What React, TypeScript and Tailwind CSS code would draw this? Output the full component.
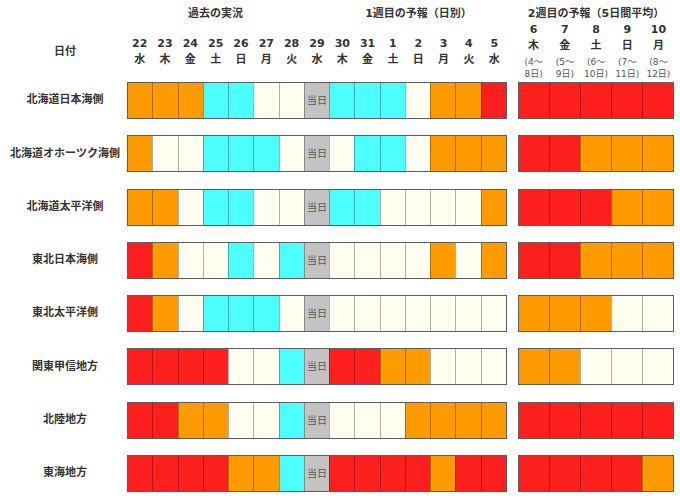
import React from "react";

type C = "R" | "O" | "C" | "W" | "G";

const fill: Record<C, string> = {
  R: "bg-[#ff1f1f]",
  O: "bg-[#ff9a00]",
  C: "bg-[#4dfefe]",
  W: "bg-[#fffef0]",
  G: "bg-[#c3c3c3]",
};

const days = [
  ["22", "水"], ["23", "木"], ["24", "金"], ["25", "土"], ["26", "日"],
  ["27", "月"], ["28", "火"], ["29", "水"], ["30", "木"], ["31", "金"],
  ["1", "土"], ["2", "日"], ["3", "月"], ["4", "火"], ["5", "水"],
];

const weeks = [
  { d: "6", w: "木", a: "(4～", b: "8日)" },
  { d: "7", w: "金", a: "(5～", b: "9日)" },
  { d: "8", w: "土", a: "(6～", b: "10日)" },
  { d: "9", w: "日", a: "(7～", b: "11日)" },
  { d: "10", w: "月", a: "(8～", b: "12日)" },
];

const rows: { name: string; daily: string; avg: string }[] = [
  { name: "北海道日本海側", daily: "OOOCCWWGCCCWOOR", avg: "RRRRR" },
  { name: "北海道オホーツク海側", daily: "OWWCCCWGWCCWOOO", avg: "RROOO" },
  { name: "北海道太平洋側", daily: "OOWCCWWGCCWWWWO", avg: "RRROO" },
  { name: "東北日本海側", daily: "ROWWCWCGWWWWOWO", avg: "RROOO" },
  { name: "東北太平洋側", daily: "ROWCCCWGWWWWWWW", avg: "OOOWW" },
  { name: "関東甲信地方", daily: "RRRRWWCGRROOWWW", avg: "OOWWW" },
  { name: "北陸地方", daily: "RROOWWCGWWWOOOO", avg: "RRRRR" },
  { name: "東海地方", daily: "RRRROOCGRRRRORR", avg: "RRRRO" },
];

const Block = ({ cells, width }: { cells: string; width: string }) => (
  <div className={`flex h-[37px] border border-[#5c5c5c] ${width}`}>
    {cells.split("").map((c, i) => (
      <div
        key={i}
        className={`flex-1 flex items-center justify-center ${fill[c as C]} ${i > 0 ? "border-l border-black/30" : ""}`}
      >
        {c === "G" && <span className="text-[10px] font-normal text-[#555]">当日</span>}
      </div>
    ))}
  </div>
);

export default function App() {
  return (
    <div className="w-[680px] h-[501px] bg-white text-[#333] font-bold text-[11px] font-['DejaVu_Sans','Noto_Sans_CJK_JP',sans-serif] overflow-hidden">
      {/* header */}
      <div className="flex h-[82px]">
        <div className="w-[127px] pl-[3px] pt-[44px] text-center leading-[16px]">日付</div>
        <div className="w-[380px]">
          <div className="flex mt-[6px] leading-[16px]">
            <div className="w-[177px] text-center">過去の実況</div>
            <div className="w-[26px]" />
            <div className="w-[177px] text-center">1週目の予報（日別）</div>
          </div>
          <div className="flex mt-[14px] leading-[16px]">
            {days.map(([d, w]) => (
              <div key={d + w} className="flex-1 flex flex-col items-center">
                <span>{d}</span>
                <span>{w}</span>
              </div>
            ))}
          </div>
        </div>
        <div className="w-[156px] ml-[11px]">
          <div className="mt-[6px] leading-[16px] text-center">2週目の予報（5日間平均）</div>
          <div className="flex">
            {weeks.map((k) => (
              <div key={k.d} className="flex-1 flex flex-col items-center">
                <span className="leading-[16px]">{k.d}</span>
                <span className="leading-[15px]">{k.w}</span>
                <span className="mt-[3px] leading-[12px] text-[9px] font-normal text-[#555] whitespace-nowrap">{k.a}</span>
                <span className="leading-[12px] text-[9px] font-normal text-[#555] whitespace-nowrap">{k.b}</span>
              </div>
            ))}
          </div>
        </div>
      </div>

      {/* rows */}
      <div className="flex flex-col gap-[16.3px]">
        {rows.map((r) => (
          <div key={r.name} className="flex items-center">
            <div className="w-[127px] pl-[3px] text-center whitespace-nowrap">{r.name}</div>
            <Block cells={r.daily} width="w-[380px]" />
            <div className="ml-[11px]">
              <Block cells={r.avg} width="w-[156px]" />
            </div>
          </div>
        ))}
      </div>
    </div>
  );
}
